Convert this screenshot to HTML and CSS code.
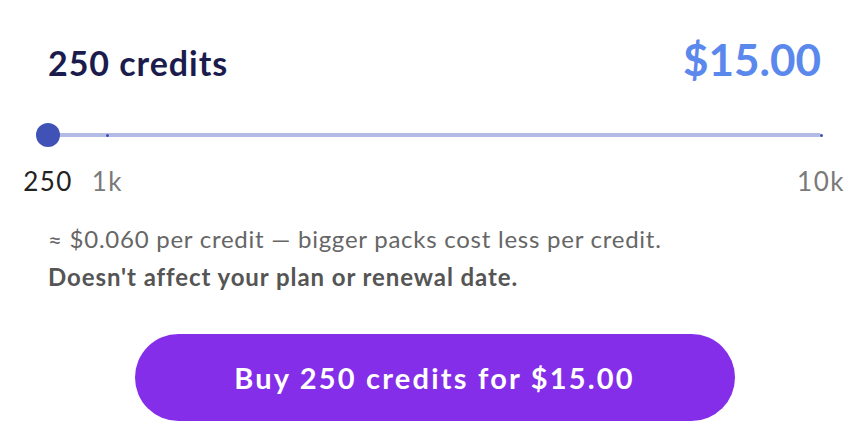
FILE: index.html
```html
<!DOCTYPE html>
<html lang="en">
<head>
<meta charset="utf-8">
<title>Buy credits</title>
<link rel="stylesheet" href="styles.css">
</head>
<body>
<div class="card">
  <div class="head">
    <h2 class="title">250 credits</h2>
    <div class="price">$15.00</div>
  </div>
  <div class="slider">
    <div class="track">
      <span class="tick" style="left:7.69%"></span>
      <span class="tick" style="left:100%"></span>
      <span class="thumb" style="left:0%"></span>
    </div>
    <div class="labels">
      <span class="lbl current" style="left:0%">250</span>
      <span class="lbl" style="left:7.69%">1k</span>
      <span class="lbl" style="left:100%">10k</span>
    </div>
  </div>
  <p class="note">≈ $0.060 per credit — bigger packs cost less per credit.</p>
  <p class="note strong">Doesn't affect your plan or renewal date.</p>
  <div class="actions">
    <button class="buy" type="button">Buy 250 credits for $15.00</button>
  </div>
</div>
</body>
</html>
```
FILE: styles.css
```css
* { box-sizing: border-box; }
html, body { margin: 0; padding: 0; background: #ffffff; }
body { font-family: Lato, "Open Sans", "Liberation Sans", sans-serif; width: 866px; height: 424px; overflow: hidden; }

.card { padding: 39px 45px 0 48px; }

.head { display: flex; justify-content: space-between; align-items: baseline; }
.title { margin: 0; font-size: 34px; line-height: 40px; font-weight: 700; letter-spacing: 0.95px; color: #1b1c4d; }
.price { font-size: 44px; line-height: 40px; font-weight: 700; color: #5b88ec; }

.slider { margin-top: 50px; position: relative; }
.track { position: relative; height: 4px; background: #b3bce4; border-radius: 2px; }
.tick { position: absolute; top: 50%; width: 3px; height: 3px; margin: -1.5px 0 0 -1.5px; border-radius: 50%; background: #3f4fb3; }
.thumb { position: absolute; top: 50%; width: 24px; height: 24px; margin: -12px 0 0 -12px; border-radius: 50%; background: #4052b6; }

.labels { position: relative; height: 40px; margin-top: 29px; }
.lbl { position: absolute; top: 0; transform: translateX(-50%); font-size: 26px; line-height: 30px; letter-spacing: 1.5px; color: #7a7a7a; white-space: nowrap; }
.lbl.current { color: #222222; }

.note { margin: 17px 0 0; font-size: 24px; line-height: 32px; letter-spacing: 0.75px; color: #666666; }
.note.strong { margin-top: 6px; font-weight: 700; letter-spacing: 0.92px; color: #555555; }

.actions { display: flex; justify-content: center; margin-top: 41px; }
.buy { width: 600px; height: 87px; padding: 0; border: 0; border-radius: 44px; background: #842ee9; color: #ffffff; font-family: inherit; font-size: 29px; font-weight: 700; letter-spacing: 2.2px; cursor: pointer; }
```
